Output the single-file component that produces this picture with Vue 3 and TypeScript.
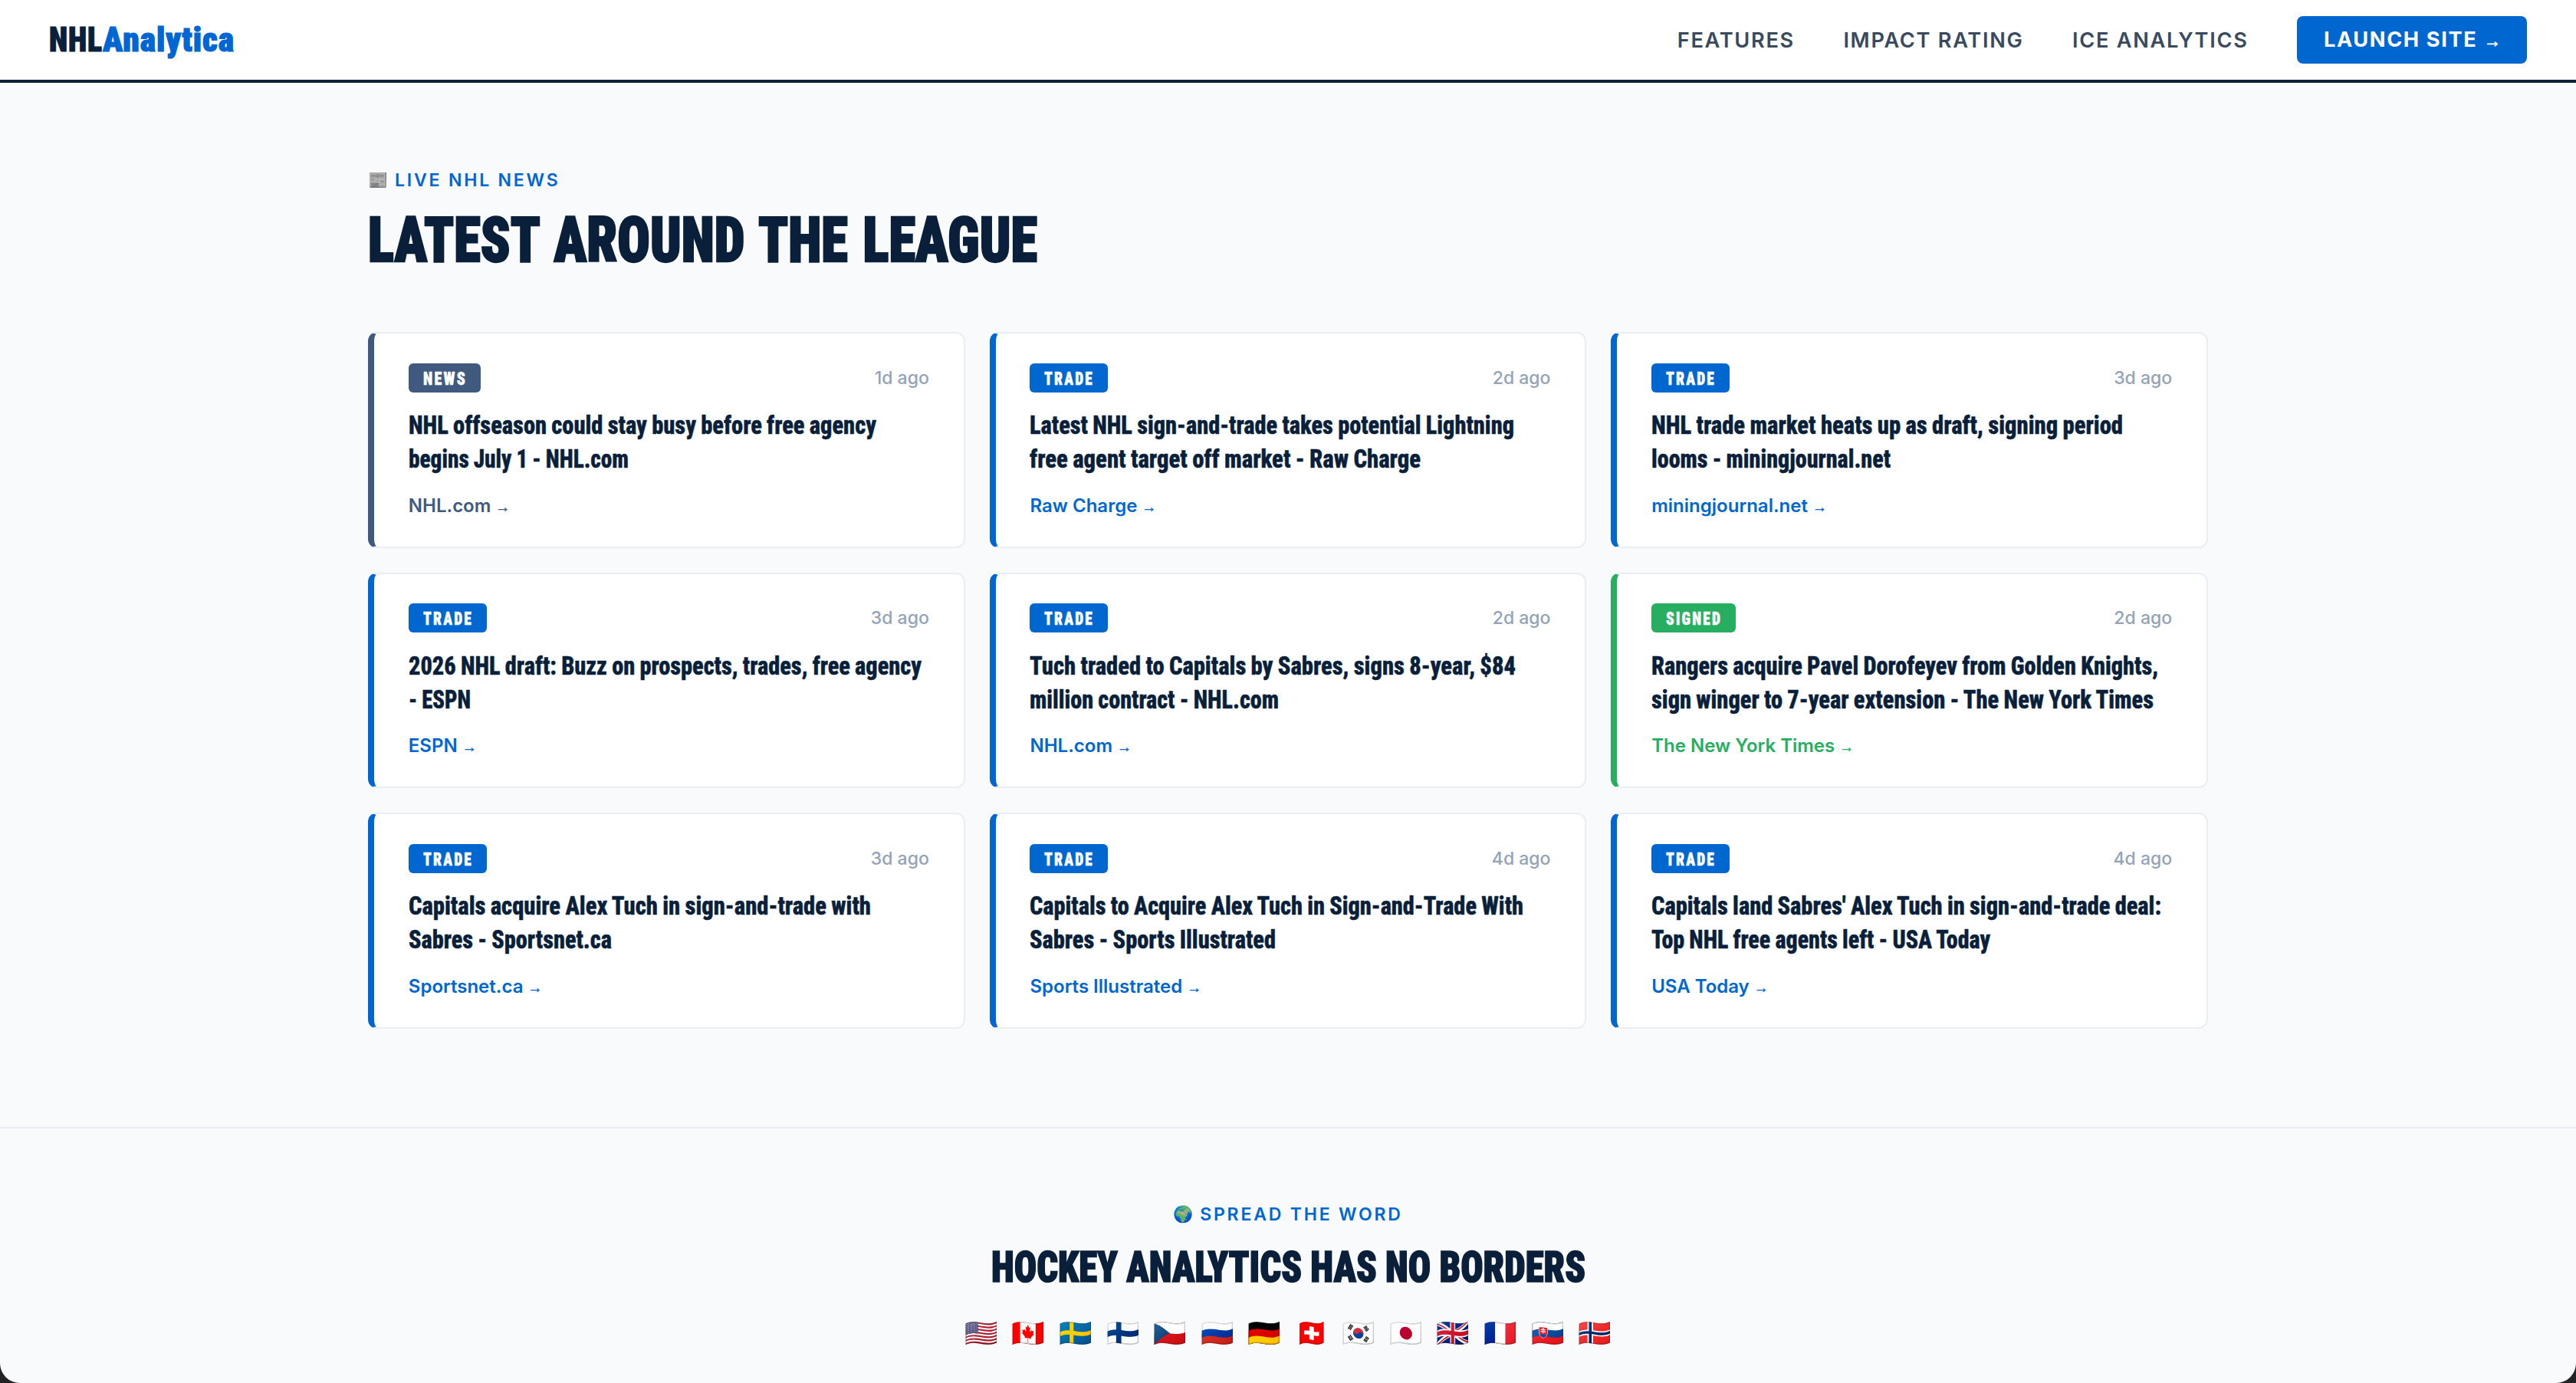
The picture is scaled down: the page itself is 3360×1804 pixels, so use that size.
<script setup lang="ts">
import { h, type FunctionalComponent } from 'vue'

type Kind = 'news' | 'trade' | 'signed'
interface Line { text: string; w: number }
interface Story { kind: Kind; age: string; source: string; lines: Line[] }

// Condensed display line: the glyphs are squeezed to the given width.
const FitText: FunctionalComponent<{ text: string; w: number; h: number; y: number; dx?: number }> = (p) =>
  h('svg', { width: p.w, height: p.h, style: { display: 'block', overflow: 'visible' } }, [
    h('text', { x: p.dx ?? 0, y: p.y, textLength: p.w, lengthAdjust: 'spacingAndGlyphs', fill: 'currentColor', stroke: 'currentColor' }, p.text),
  ])
FitText.props = ['text', 'w', 'h', 'y', 'dx']

const badges: Record<Kind, Line> = {
  news: { text: 'NEWS', w: 57.2 },
  trade: { text: 'TRADE', w: 65 },
  signed: { text: 'SIGNED', w: 73 },
}

const s = (kind: Kind, age: string, source: string, a: string, aw: number, b: string, bw: number): Story => ({
  kind, age, source, lines: [{ text: a, w: aw }, { text: b, w: bw }],
})

const stories: Story[] = [
  s('news', '1d ago', 'NHL.com', 'NHL offseason could stay busy before free agency', 610, 'begins July 1 - NHL.com', 287),
  s('trade', '2d ago', 'Raw Charge', 'Latest NHL sign-and-trade takes potential Lightning', 632, 'free agent target off market - Raw Charge', 510),
  s('trade', '3d ago', 'miningjournal.net', 'NHL trade market heats up as draft, signing period', 615, 'looms - miningjournal.net', 312),
  s('trade', '3d ago', 'ESPN', '2026 NHL draft: Buzz on prospects, trades, free agency', 669, '- ESPN', 81),
  s('trade', '2d ago', 'NHL.com', 'Tuch traded to Capitals by Sabres, signs 8-year, $84', 634, 'million contract - NHL.com', 325),
  s('signed', '2d ago', 'The New York Times', 'Rangers acquire Pavel Dorofeyev from Golden Knights,', 661, 'sign winger to 7-year extension - The New York Times', 655),
  s('trade', '3d ago', 'Sportsnet.ca', 'Capitals acquire Alex Tuch in sign-and-trade with', 603, 'Sabres - Sportsnet.ca', 265),
  s('trade', '4d ago', 'Sports Illustrated', 'Capitals to Acquire Alex Tuch in Sign-and-Trade With', 644, 'Sabres - Sports Illustrated', 321),
  s('trade', '4d ago', 'USA Today', "Capitals land Sabres' Alex Tuch in sign-and-trade deal:", 665, 'Top NHL free agents left - USA Today', 442),
]

const links = ['FEATURES', 'IMPACT RATING', 'ICE ANALYTICS']
const flags = ['🇺🇸', '🇨🇦', '🇸🇪', '🇫🇮', '🇨🇿', '🇷🇺', '🇩🇪', '🇨🇭', '🇰🇷', '🇯🇵', '🇬🇧', '🇫🇷', '🇸🇰', '🇳🇴']
</script>

<template>
  <div class="page">
    <header class="nav">
      <div class="logo">
        <FitText class="logo-a" text="NHL" :w="70" :h="56" :y="43.2" />
        <FitText class="logo-b" text="Analytica" :w="172" :h="56" :y="43.2" />
      </div>
      <nav class="links">
        <a v-for="l in links" :key="l">{{ l }}</a>
        <a class="launch">LAUNCH SITE<span class="arrow">→</span></a>
      </nav>
    </header>

    <section class="news-section">
      <div class="label"><span class="emoji paper">📰</span>LIVE NHL NEWS</div>
      <FitText class="title" text="LATEST AROUND THE LEAGUE" :w="873" :h="100" :y="91.8" />
      <div class="grid">
        <article v-for="(st, i) in stories" :key="i" class="card" :class="st.kind">
          <div class="meta">
            <div class="badge">
              <FitText :text="badges[st.kind].text" :w="badges[st.kind].w" :h="38" :y="28" />
            </div>
            <span class="age">{{ st.age }}</span>
          </div>
          <div class="headline">
            <FitText v-for="(l, j) in st.lines" :key="j" :text="l.text" :w="l.w" :h="43.68" :y="33.4" />
          </div>
          <div class="source">{{ st.source }}<span class="arrow">→</span></div>
        </article>
      </div>
    </section>

    <section class="spread">
      <div class="label"><span class="emoji globe">🌍</span>SPREAD THE WORD</div>
      <FitText class="title small" text="HOCKEY ANALYTICS HAS NO BORDERS" :w="775" :h="85" :y="74.2" />
      <div class="flags">
        <span v-for="f in flags" :key="f" class="flag">{{ f }}</span>
      </div>
    </section>
  </div>
</template>

<style>
body {
  background: #222224;
}
</style>

<style scoped>
.page {
  height: 1804px;
  display: flex;
  flex-direction: column;
  overflow: hidden;
  background: #f8fafc;
  border-radius: 0 0 26px 26px;
  font-family: Inter, 'Liberation Sans', sans-serif;
  color: #0a1f3a;
}
.nav {
  flex: none;
  height: 108px;
  box-sizing: border-box;
  display: flex;
  align-items: center;
  justify-content: space-between;
  padding: 0 64px;
  background: #fff;
  border-bottom: 4px solid #0a2138;
}
.logo {
  display: flex;
  font: 900 44.5px Roboto, sans-serif;
  font-stretch: 75%;
  letter-spacing: 1px;
  stroke-width: 1.2px;
}
.logo-a {
  color: #0a1f3a;
}
.logo-b {
  color: #0066d3;
}
.links {
  display: flex;
  align-items: center;
  gap: 63.4px;
  font-size: 27.2px;
  font-weight: 600;
  letter-spacing: 1.7px;
  color: #3a4a5e;
}
.launch {
  box-sizing: border-box;
  width: 300px;
  height: 61.5px;
  padding-left: 35px;
  line-height: 62px;
  border-radius: 8px;
  background: #0066d0;
  color: #fff;
  font-weight: 700;
  letter-spacing: 1.6px;
  white-space: nowrap;
}
.arrow {
  font-family: 'Liberation Sans', sans-serif;
  font-weight: 700;
  font-size: 19px;
  letter-spacing: 0;
  margin-left: 6px;
  -webkit-text-stroke: 0.4px currentColor;
}
.launch .arrow {
  font-size: 22px;
  margin-left: 9px;
  -webkit-text-stroke: 0.8px currentColor;
}
.news-section {
  flex: none;
  height: 1362px;
  box-sizing: border-box;
  width: 2400px;
  margin: 0 auto;
  padding-top: 112.6px;
}
.label {
  display: flex;
  align-items: center;
  height: 28px;
  font-size: 23.04px;
  line-height: 28px;
  font-weight: 600;
  letter-spacing: 2.8px;
  color: #0066d0;
}
.emoji {
  width: 25px;
  margin-right: 10px;
  font-size: 21px;
  line-height: 28px;
  letter-spacing: 0;
  display: flex;
  justify-content: center;
}
.paper {
  filter: brightness(0.76);
  transform: scaleY(1.12);
}
.globe {
  filter: brightness(0.8) saturate(1.1);
}
.title {
  font: 900 82px Roboto, sans-serif;
  font-stretch: 75%;
  word-spacing: 4px;
  color: #0a1f3a;
  stroke-width: 2.4px;
}
.title.small {
  font-size: 56px;
  word-spacing: 0;
  stroke-width: 1.6px;
}
.grid {
  margin-top: 84.7px;
  display: grid;
  grid-template-columns: repeat(3, 1fr);
  grid-auto-rows: 281.6px;
  gap: 32px;
}
.card {
  --tone: #0066d0;
  box-sizing: border-box;
  display: flex;
  flex-direction: column;
  padding: 38.4px 44.8px 37px;
  background: #fff;
  border: 2px solid #e9eef5;
  border-left: 8px solid var(--tone);
  border-radius: 12px;
}
.card.news {
  --tone: #40597f;
}
.card.signed {
  --tone: #27ae60;
}
.meta {
  display: flex;
  justify-content: space-between;
  align-items: center;
  height: 38px;
}
.badge {
  height: 38px;
  padding: 0 17.8px 0 19px;
  border-radius: 6px;
  background: var(--tone);
  color: #fff;
  font: 900 23px Roboto, sans-serif;
  font-stretch: 75%;
  letter-spacing: 2.6px;
  stroke-width: 0.5px;
}
.age {
  font-size: 23.04px;
  font-weight: 500;
  color: #94a3b8;
}
.headline {
  margin-top: 21.6px;
  font: 800 33px Roboto, sans-serif;
  font-stretch: 75%;
  word-spacing: -0.8px;
  color: #0a1f3a;
  stroke-width: 0.5px;
}
.source {
  margin-top: auto;
  font-size: 24px;
  line-height: 29px;
  font-weight: 600;
  color: var(--tone);
}
.spread {
  flex: 1;
  box-sizing: border-box;
  border-top: 2px solid #e9edf3;
  padding-top: 97.6px;
  display: flex;
  flex-direction: column;
  align-items: center;
}
.flags {
  margin-top: 28px;
  display: flex;
  gap: 19.55px;
}
.flag {
  width: 42px;
  height: 54px;
  line-height: 54px;
  font-size: 35px;
  display: flex;
  justify-content: center;
}
</style>
